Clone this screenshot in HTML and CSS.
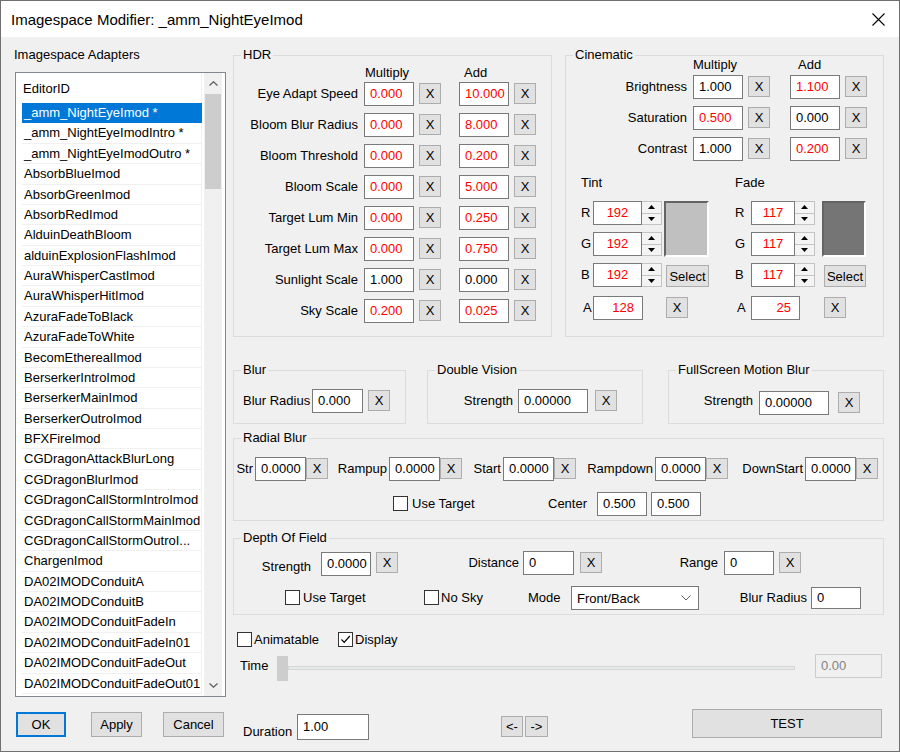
FILE: index.html
```html
<!DOCTYPE html>
<html>
<head>
<meta charset="utf-8">
<title>Imagespace Modifier</title>
<link rel="stylesheet" href="styles.css">
</head>
<body>
<div class="window">
  <div class="titlebar">
    <span class="title">Imagespace Modifier: _amm_NightEyeImod</span>
    <svg class="close" width="13" height="13" viewBox="0 0 13 13"><path d="M0.5 0.5L12.5 12.5M12.5 0.5L0.5 12.5" stroke="#000" stroke-width="1.1" fill="none"/></svg>
  </div>
  <div class="main">
    <div class="left">
      <div class="left-label">Imagespace Adapters</div>
      <div class="list">
        <div class="list-body">
          <div class="list-head">EditorID</div>
          <div class="item sel">_amm_NightEyeImod *</div>
          <div class="item">_amm_NightEyeImodIntro *</div>
          <div class="item">_amm_NightEyeImodOutro *</div>
          <div class="item">AbsorbBlueImod</div>
          <div class="item">AbsorbGreenImod</div>
          <div class="item">AbsorbRedImod</div>
          <div class="item">AlduinDeathBloom</div>
          <div class="item">alduinExplosionFlashImod</div>
          <div class="item">AuraWhisperCastImod</div>
          <div class="item">AuraWhisperHitImod</div>
          <div class="item">AzuraFadeToBlack</div>
          <div class="item">AzuraFadeToWhite</div>
          <div class="item">BecomEtherealImod</div>
          <div class="item">BerserkerIntroImod</div>
          <div class="item">BerserkerMainImod</div>
          <div class="item">BerserkerOutroImod</div>
          <div class="item">BFXFireImod</div>
          <div class="item">CGDragonAttackBlurLong</div>
          <div class="item">CGDragonBlurImod</div>
          <div class="item">CGDragonCallStormIntroImod</div>
          <div class="item">CGDragonCallStormMainImod</div>
          <div class="item">CGDragonCallStormOutroI...</div>
          <div class="item">ChargenImod</div>
          <div class="item">DA02IMODConduitA</div>
          <div class="item">DA02IMODConduitB</div>
          <div class="item">DA02IMODConduitFadeIn</div>
          <div class="item">DA02IMODConduitFadeIn01</div>
          <div class="item">DA02IMODConduitFadeOut</div>
          <div class="item">DA02IMODConduitFadeOut01</div>
        </div>
        <div class="vscroll">
          <div class="sb-arrow"><svg width="9" height="5" viewBox="0 0 9 5"><path d="M0.5 4.5L4.5 0.8L8.5 4.5" stroke="#606060" stroke-width="1.3" fill="none"/></svg></div>
          <div class="sb-track"><div class="thumb"></div></div>
          <div class="sb-arrow"><svg width="9" height="5" viewBox="0 0 9 5"><path d="M0.5 0.5L4.5 4.2L8.5 0.5" stroke="#606060" stroke-width="1.3" fill="none"/></svg></div>
        </div>
      </div>
      <div class="btnrow">
        <div class="btn ok">OK</div>
        <div class="btn apply">Apply</div>
        <div class="btn cancel">Cancel</div>
      </div>
    </div>

    <div class="right">
      <div class="toprow">
        <fieldset class="grp hdr">
          <legend>HDR</legend>
          <div class="hdr-head"><span class="h-mul">Multiply</span><span class="h-add">Add</span></div>
          <div class="hdr-grid">
            <div class="lbl">Eye Adapt Speed</div><div class="tb red">0.000</div><div class="x">X</div><div class="tb red add">10.000</div><div class="x">X</div>
            <div class="lbl">Bloom Blur Radius</div><div class="tb red">0.000</div><div class="x">X</div><div class="tb red add">8.000</div><div class="x">X</div>
            <div class="lbl">Bloom Threshold</div><div class="tb red">0.000</div><div class="x">X</div><div class="tb red add">0.200</div><div class="x">X</div>
            <div class="lbl">Bloom Scale</div><div class="tb red">0.000</div><div class="x">X</div><div class="tb red add">5.000</div><div class="x">X</div>
            <div class="lbl">Target Lum Min</div><div class="tb red">0.000</div><div class="x">X</div><div class="tb red add">0.250</div><div class="x">X</div>
            <div class="lbl">Target Lum Max</div><div class="tb red">0.000</div><div class="x">X</div><div class="tb red add">0.750</div><div class="x">X</div>
            <div class="lbl">Sunlight Scale</div><div class="tb">1.000</div><div class="x">X</div><div class="tb add">0.000</div><div class="x">X</div>
            <div class="lbl">Sky Scale</div><div class="tb red">0.200</div><div class="x">X</div><div class="tb red add">0.025</div><div class="x">X</div>
          </div>
        </fieldset>

        <fieldset class="grp cin">
          <legend>Cinematic</legend>
          <div class="cin-head"><span class="h-mul">Multiply</span><span class="h-add">Add</span></div>
          <div class="cin-grid">
            <div class="lbl">Brightness</div><div class="tb">1.000</div><div class="x">X</div><div class="tb red add">1.100</div><div class="x">X</div>
            <div class="lbl">Saturation</div><div class="tb red">0.500</div><div class="x">X</div><div class="tb add">0.000</div><div class="x">X</div>
            <div class="lbl">Contrast</div><div class="tb">1.000</div><div class="x">X</div><div class="tb red add">0.200</div><div class="x">X</div>
          </div>
          <div class="tf">
            <div class="tf-block tint">
              <div class="tf-title">Tint</div>
              <div class="tf-grid">
                <div class="tf-lbl">R</div>
                <div class="spin"><div class="spin-tb red">192</div><div class="spin-btns"><div><svg width="7" height="4" viewBox="0 0 7 4"><path d="M0 4L3.5 0L7 4Z" fill="#000"/></svg></div><div><svg width="7" height="4" viewBox="0 0 7 4"><path d="M0 0L3.5 4L7 0Z" fill="#000"/></svg></div></div></div>
                <div class="swatch" style="background:#c0c0c0"></div>
                <div class="tf-lbl">G</div>
                <div class="spin"><div class="spin-tb red">192</div><div class="spin-btns"><div><svg width="7" height="4" viewBox="0 0 7 4"><path d="M0 4L3.5 0L7 4Z" fill="#000"/></svg></div><div><svg width="7" height="4" viewBox="0 0 7 4"><path d="M0 0L3.5 4L7 0Z" fill="#000"/></svg></div></div></div>
                <div class="tf-lbl">B</div>
                <div class="spin"><div class="spin-tb red">192</div><div class="spin-btns"><div><svg width="7" height="4" viewBox="0 0 7 4"><path d="M0 4L3.5 0L7 4Z" fill="#000"/></svg></div><div><svg width="7" height="4" viewBox="0 0 7 4"><path d="M0 0L3.5 4L7 0Z" fill="#000"/></svg></div></div></div>
                <div class="sel-btn">Select</div>
                <div class="tf-lbl a">A</div>
                <div class="tb red a-tb">128</div>
                <div class="x a-x">X</div>
              </div>
            </div>
            <div class="tf-block fade">
              <div class="tf-title">Fade</div>
              <div class="tf-grid">
                <div class="tf-lbl">R</div>
                <div class="spin"><div class="spin-tb red">117</div><div class="spin-btns"><div><svg width="7" height="4" viewBox="0 0 7 4"><path d="M0 4L3.5 0L7 4Z" fill="#000"/></svg></div><div><svg width="7" height="4" viewBox="0 0 7 4"><path d="M0 0L3.5 4L7 0Z" fill="#000"/></svg></div></div></div>
                <div class="swatch" style="background:#757575"></div>
                <div class="tf-lbl">G</div>
                <div class="spin"><div class="spin-tb red">117</div><div class="spin-btns"><div><svg width="7" height="4" viewBox="0 0 7 4"><path d="M0 4L3.5 0L7 4Z" fill="#000"/></svg></div><div><svg width="7" height="4" viewBox="0 0 7 4"><path d="M0 0L3.5 4L7 0Z" fill="#000"/></svg></div></div></div>
                <div class="tf-lbl">B</div>
                <div class="spin"><div class="spin-tb red">117</div><div class="spin-btns"><div><svg width="7" height="4" viewBox="0 0 7 4"><path d="M0 4L3.5 0L7 4Z" fill="#000"/></svg></div><div><svg width="7" height="4" viewBox="0 0 7 4"><path d="M0 0L3.5 4L7 0Z" fill="#000"/></svg></div></div></div>
                <div class="sel-btn">Select</div>
                <div class="tf-lbl a">A</div>
                <div class="tb red a-tb">25</div>
                <div class="x a-x">X</div>
              </div>
            </div>
          </div>
        </fieldset>
      </div>

      <div class="row2">
        <fieldset class="grp blur">
          <legend>Blur</legend>
          <div class="grow">
            <div class="lbl-l blur-lbl">Blur Radius</div><div class="tb w51">0.000</div><div class="x ml5">X</div>
          </div>
        </fieldset>
        <fieldset class="grp dv">
          <legend>Double Vision</legend>
          <div class="grow">
            <div class="lbl-r dv-lbl">Strength</div><div class="tb w70">0.00000</div><div class="x ml7">X</div>
          </div>
        </fieldset>
        <fieldset class="grp fs">
          <legend>FullScreen Motion Blur</legend>
          <div class="grow">
            <div class="lbl-r fs-lbl">Strength</div><div class="tb w70 mt2">0.00000</div><div class="x ml9 mt3">X</div>
          </div>
        </fieldset>
      </div>

      <fieldset class="grp radial">
        <legend>Radial Blur</legend>
        <div class="grow r1">
          <div class="lbl-r rl" style="width:21px">Str</div><div class="tb w51">0.0000</div><div class="x">X</div>
          <div class="lbl-r rl" style="width:61px">Rampup</div><div class="tb w51">0.0000</div><div class="x">X</div>
          <div class="lbl-r rl" style="width:41px">Start</div><div class="tb w51">0.0000</div><div class="x">X</div>
          <div class="lbl-r rl" style="width:79px">Rampdown</div><div class="tb w51">0.0000</div><div class="x">X</div>
          <div class="lbl-r rl" style="width:77px">DownStart</div><div class="tb w51">0.0000</div><div class="x">X</div>
        </div>
        <div class="grow r2">
          <div class="cbg rb-cbg"><div class="cb"></div><span class="cb-text ml4">Use Target</span></div>
          <div class="lbl-l center-lbl">Center</div><div class="tb w50">0.500</div><div class="tb w50 ml4">0.500</div>
        </div>
      </fieldset>

      <fieldset class="grp dof">
        <legend>Depth Of Field</legend>
        <div class="grow d1">
          <div class="lbl-r dof-str">Strength</div><div class="tb w50 mt1">0.0000</div><div class="x ml5">X</div>
          <div class="lbl-r dof-dist">Distance</div><div class="tb w51">0</div><div class="x ml6">X</div>
          <div class="lbl-r dof-range">Range</div><div class="tb w50">0</div><div class="x ml5">X</div>
        </div>
        <div class="grow d2">
          <div class="cbg dof-cbg1"><div class="cb"></div><span class="cb-text ml3">Use Target</span></div>
          <div class="cbg dof-cbg2"><div class="cb"></div><span class="cb-text ml2">No Sky</span></div>
          <div class="lbl-l mode-lbl">Mode</div>
          <div class="dropdown"><span>Front/Back</span><svg width="10" height="6" viewBox="0 0 10 6"><path d="M0.5 0.5L5 5L9.5 0.5" stroke="#606060" stroke-width="1" fill="none"/></svg></div>
          <div class="lbl-r dof-br">Blur Radius</div><div class="tb w50 h22">0</div>
        </div>
      </fieldset>

      <div class="checks">
        <div class="cbg anim-cbg"><div class="cb"></div><span class="ml2">Animatable</span></div>
        <div class="cbg"><div class="cb"><svg width="13" height="13" viewBox="0 0 13 13"><path d="M2.5 6.5L5.2 9.3L10.8 3" stroke="#000" stroke-width="1.2" fill="none"/></svg></div><span class="ml2">Display</span></div>
      </div>

      <div class="timerow">
        <div class="lbl-l time-lbl">Time</div>
        <div class="slider-thumb"></div>
        <div class="slider-track"></div>
        <div class="tb disabled">0.00</div>
      </div>

      <div class="bottomrow">
        <div class="lbl-l dur-lbl">Duration</div>
        <div class="tb dur-tb">1.00</div>
        <div class="btn arr arr-l">&lt;-</div>
        <div class="btn arr arr-r">-&gt;</div>
        <div class="btn test">TEST</div>
      </div>
    </div>
  </div>
</div>
</body>
</html>
```

FILE: styles.css
```css
* { box-sizing: border-box; }
html, body { margin: 0; padding: 0; }
body {
  font-family: "Liberation Sans", Arial, sans-serif;
  font-size: 13px;
  color: #000;
  background: #f0f0f0;
}
.window {
  width: 900px;
  height: 752px;
  border: 1px solid #707070;
  background: #f0f0f0;
  display: flex;
  flex-direction: column;
  overflow: hidden;
}
.titlebar {
  flex: none;
  height: 36px;
  background: #fff;
  display: flex;
  align-items: center;
  padding-left: 10px;
}
.title { flex: 1; font-size: 15px; }
.close { margin-right: 14px; }

.main { flex: 1; display: flex; padding-left: 14px; }

/* left column */
.left { flex: none; width: 211px; display: flex; flex-direction: column; }
.left-label { margin-top: 10px; line-height: 16px; margin-left: -1px; }
.list {
  margin-top: 9px;
  width: 211px;
  height: 625px;
  border: 1px solid #828790;
  background: #fff;
  display: flex;
}
.list-body { width: 186px; padding-left: 6px; overflow: hidden; }
.list-head {
  height: 30px;
  line-height: 31px;
  padding-left: 1px;
  border-right: 1px solid #f0f0f0;
}
.item {
  height: 20.38px;
  line-height: 20px;
  padding-left: 2px;
  border-bottom: 1px solid #f0f0f0;
  border-right: 1px solid #f0f0f0;
  white-space: nowrap;
  overflow: hidden;
}
.item.sel { background: #0078d7; color: #fff; border-color: #0078d7; }
.vscroll {
  width: 18px;
  margin-left: 2px;
  background: #f0f0f0;
  display: flex;
  flex-direction: column;
}
.sb-arrow { height: 21px; display: flex; align-items: center; justify-content: center; }
.sb-track { flex: 1; }
.thumb { height: 95px; margin: 0 1px; background: #cdcdcd; }

.btnrow { display: flex; margin-top: 15px; }
.btn {
  height: 25px;
  background: #e1e1e1;
  border: 1px solid #adadad;
  display: flex;
  align-items: center;
  justify-content: center;
}
.ok { margin-left: 1px; width: 50px; border-color: #0078d7; box-shadow: inset 0 0 0 1px #0078d7; }
.apply { margin-left: 25px; width: 51px; }
.cancel { margin-left: 21px; width: 61px; }

/* right column */
.right { margin-left: 7px; width: 651px; display: flex; flex-direction: column; flex: none; }

.grp {
  margin: 0;
  padding: 0;
  min-width: 0;
  border: 1px solid #dcdcdc;
}
.grp > legend {
  margin-left: 7px;
  padding: 0 2px;
  line-height: 16px;
}

.tb {
  height: 24px;
  background: #fff;
  border: 1px solid #7a7a7a;
  padding: 0 5px;
  line-height: 22px;
  white-space: nowrap;
  overflow: hidden;
  flex: none;
}
.red { color: #ff0000; }
.x {
  width: 22px;
  height: 21px;
  margin-top: 1px;
  background: #e1e1e1;
  border: 1px solid #adadad;
  display: flex;
  align-items: center;
  justify-content: center;
  flex: none;
}
.lbl { text-align: right; padding-right: 1px; line-height: 24px; white-space: nowrap; }

.toprow { display: flex; margin-top: 10px; }
.hdr { width: 319px; }
.cin { width: 319px; margin-left: 13px; }

.hdr-head, .hdr-grid {
  display: grid;
  grid-template-columns: 125px 50px 22px 63px 22px;
  column-gap: 5px;
}
.hdr-head { height: 16px; line-height: 16px; margin-top: 2px; margin-bottom: 1px; }
.hdr-head .h-mul { grid-column: 2; margin-left: 1px; white-space: nowrap; }
.hdr-head .h-add { grid-column: 4; margin-left: 18px; }
.hdr-grid { grid-auto-rows: 24px; row-gap: 7px; padding-bottom: 13px; }
.hdr-grid .add, .cin-grid .add { justify-self: end; width: 50px; }
.hdr-grid .x, .cin-grid .x { align-self: start; }

.cin-head, .cin-grid {
  display: grid;
  grid-template-columns: 122px 50px 22px 65px 22px;
  column-gap: 5px;
}
.cin-head { height: 16px; line-height: 16px; margin-top: -6px; }
.cin-head .h-mul { grid-column: 2; white-space: nowrap; }
.cin-head .h-add { grid-column: 4; margin-left: 23px; }
.cin-grid { grid-auto-rows: 24px; row-gap: 7px; margin-top: 2px; }

.tf { display: flex; margin-top: 14px; margin-left: 15px; }
.fade { margin-left: 26px; }
.tf-title { line-height: 16px; }
.tf-grid {
  display: grid;
  grid-template-rows: 24px 24px 24px 26px;
  row-gap: 7px;
  column-gap: 2px;
  margin-top: 10px;
}
.tint .tf-grid { grid-template-columns: 10px 69px 45px; }
.fade .tf-grid { grid-template-columns: 14px 64px 49px; }
.tf-lbl { line-height: 24px; grid-column: 1; white-space: nowrap; }
.tf-lbl.a { align-self: end; margin-left: 2px; }
.spin { display: flex; height: 24px; grid-column: 2; }
.spin-tb {
  flex: 1;
  background: #fff;
  border: 1px solid #7a7a7a;
  text-align: center;
  line-height: 22px;
}
.spin-btns {
  width: 20px;
  flex: none;
  display: flex;
  flex-direction: column;
  border: 1px solid #c4c4c4;
  border-left: none;
  background: #f4f4f4;
}
.spin-btns > div { flex: 1; display: flex; align-items: center; justify-content: center; }
.spin-btns > div:first-child { border-bottom: 1px solid #c4c4c4; }
.swatch {
  grid-column: 3;
  grid-row: 1 / span 2;
  height: 56px;
  border-top: 2px solid #646464;
  border-left: 2px solid #646464;
  border-right: 2px solid #fff;
  border-bottom: 2px solid #fff;
}
.fade .swatch { width: 44px; justify-self: end; }
.sel-btn {
  grid-column: 3;
  grid-row: 3;
  align-self: end;
  justify-self: end;
  width: 43px;
  height: 22px;
  background: #e1e1e1;
  border: 1px solid #adadad;
  display: flex;
  align-items: center;
  justify-content: center;
}
.fade .sel-btn { width: 42px; }
.a-tb { grid-column: 2; grid-row: 4; width: 50px; align-self: end; text-align: right; padding-right: 8px; }
.fade .a-tb { width: 49px; }
.a-x { grid-column: 3; grid-row: 4; align-self: end; margin-bottom: 2px; margin-left: 2px; }
.fade .a-x { margin-left: 7px; }

/* generic rows */
.grow { display: flex; align-items: flex-start; }
.lbl-l, .lbl-r { line-height: 24px; white-space: nowrap; flex: none; }
.lbl-r { text-align: right; }
.w50 { width: 50px; }
.w51 { width: 51px; }
.w70 { width: 70px; }
.h22 { height: 22px; line-height: 20px; margin-top: 1px; }
.ml2 { margin-left: 2px; }
.ml3 { margin-left: 3px; }
.ml4 { margin-left: 4px; }
.ml5 { margin-left: 5px; }
.ml6 { margin-left: 6px; }
.ml7 { margin-left: 7px; }
.ml9 { margin-left: 9px; }
.mt1 { margin-top: 1px; }
.mt2 { margin-top: 2px; }
.mt3 { margin-top: 3px; }

.row2 { display: flex; margin-top: 25px; }
.blur { width: 173px; }
.dv { width: 216px; margin-left: 21px; }
.fs { width: 216px; margin-left: 25px; }
.blur .grow, .dv .grow { margin-top: 11px; margin-bottom: 10px; }
.fs .grow { margin-top: 11px; margin-bottom: 8px; }
.blur-lbl { width: 78px; padding-left: 9px; }
.dv-lbl { width: 90px; padding-right: 5px; }
.fs-lbl { width: 90px; padding-right: 6px; }

.radial { margin-top: 6px; }
.r1 { margin-top: 11px; }
.rl { padding-right: 2px; }
.r2 { margin-top: 11px; margin-bottom: 4px; }
.cbg { display: flex; align-items: flex-start; flex: none; }
.cb {
  width: 15px;
  height: 15px;
  border: 1px solid #333;
  background: #fff;
  flex: none;
  display: flex;
  align-items: center;
  justify-content: center;
}
.cb-text { line-height: 24px; }
.rb-cbg { margin-left: 159px; width: 155px; }
.rb-cbg .cb, .d2 .cb { margin-top: 4px; }
.center-lbl { width: 49px; }

.dof { margin-top: 9px; }
.d1 { margin-top: 5px; }
.dof-str { width: 87px; padding-right: 10px; margin-top: 4px; margin-bottom: -4px; }
.dof-dist { width: 125px; padding-right: 4px; }
.dof-range { width: 122px; padding-right: 6px; }
.d2 { margin-top: 10px; margin-bottom: 4px; }
.dof-cbg1 { margin-left: 51px; width: 139px; }
.dof-cbg2 { width: 104px; }
.mode-lbl { width: 43px; }
.dropdown {
  width: 128px;
  height: 24px;
  background: #fff;
  border: 1px solid #7a7a7a;
  display: flex;
  align-items: center;
  justify-content: space-between;
  padding: 0 7px 0 5px;
  flex: none;
}
.dof-br { width: 112px; padding-right: 4px; }

.checks { display: flex; margin-top: 17px; margin-left: 4px; line-height: 16px; }
.anim-cbg { width: 101px; }

.timerow { display: flex; align-items: flex-start; margin-top: 6px; }
.time-lbl { margin-left: 7px; width: 37px; }
.slider-thumb { width: 11px; height: 25px; margin-top: 2px; background: #cdcdcd; flex: none; }
.slider-track {
  width: 507px;
  height: 4px;
  margin-top: 12px;
  background: #e7eaea;
  border: 1px solid #d6d6d6;
  flex: none;
}
.tb.disabled {
  margin-left: 20px;
  width: 67px;
  background: #f0f0f0;
  border-color: #cccccc;
  color: #838383;
}

.bottomrow { display: flex; align-items: flex-start; margin-top: 28px; }
.dur-lbl { margin-left: 10px; width: 54px; margin-top: 11px; }
.dur-tb { width: 72px; height: 26px; line-height: 24px; margin-top: 5px; }
.arr { height: 21px; margin-top: 7px; flex: none; }
.arr-l { width: 22px; margin-left: 132px; }
.arr-r { width: 23px; margin-left: 2px; }
.test { width: 190px; height: 29px; margin-left: 144px; flex: none; }
```
